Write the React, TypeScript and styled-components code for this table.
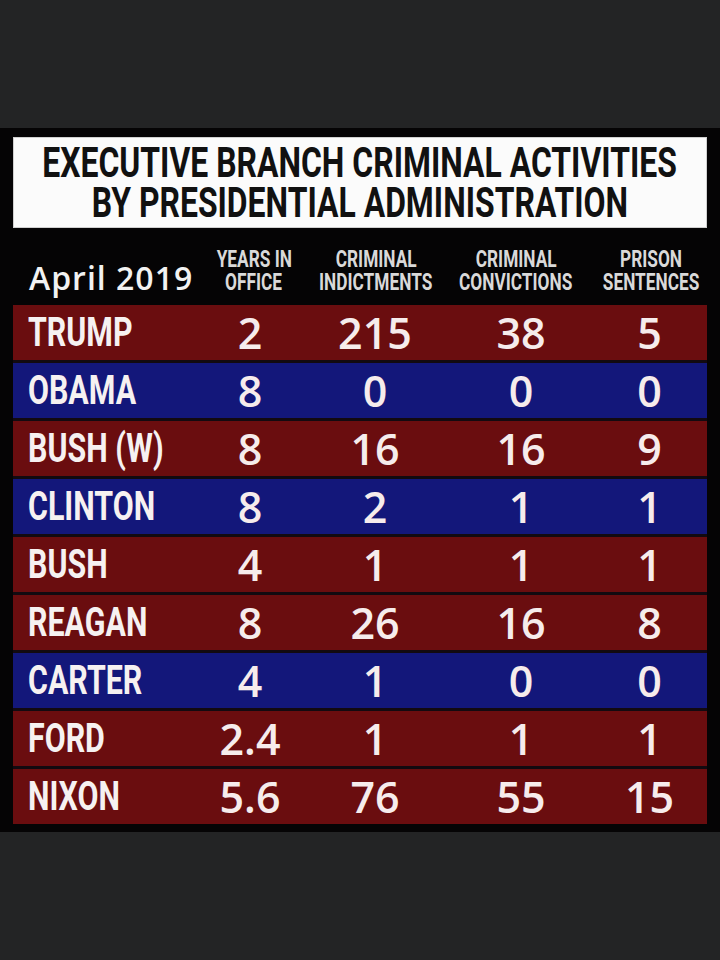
import React from "react";
import styled, { createGlobalStyle } from "styled-components";

const Global = createGlobalStyle`
  html, body { margin: 0; padding: 0; background: #232425; }
  body { font-family: "Open Sans", "Liberation Sans", sans-serif; }
`;

const Page = styled.div`
  width: 720px;
  height: 960px;
  background: #232425;
  display: flex;
  flex-direction: column;
  padding-top: 128px;
  box-sizing: border-box;
`;

const Panel = styled.section`
  background: #050405;
  padding: 9px 13px 8px 13px;
  display: flex;
  flex-direction: column;
`;

const TitleBox = styled.header`
  background: #fbfbfb;
  height: 91px;
  box-sizing: border-box;
  border: 1px solid #d0d0d0;
  display: flex;
  flex-direction: column;
  align-items: center;
  justify-content: center;
  padding-top: 1px;
`;

const Condensed = styled.span<{ $scale: number; $origin?: string }>`
  display: inline-block;
  white-space: nowrap;
  transform: scaleX(${(p) => p.$scale});
  transform-origin: ${(p) => p.$origin ?? "center"} center;
`;

const TitleLine = styled.div`
  font-family: Roboto, "Liberation Sans", sans-serif;
  font-weight: 700;
  font-size: 42px;
  line-height: 40px;
  color: #111;
  display: flex;
  justify-content: center;
  width: 100%;
`;

const Grid = styled.div`
  display: grid;
  grid-template-columns: 187px 100px 150px 142px 115px;
`;

const HeaderRow = styled(Grid)`
  height: 77px;
  align-items: center;
`;

const Month = styled.div`
  font-family: "Open Sans", "Liberation Sans", sans-serif;
  font-weight: 600;
  font-size: 32px;
  letter-spacing: 1px;
  color: #f2f2f2;
  padding-left: 16px;
  padding-top: 22px;
  white-space: nowrap;
`;

const ColHead = styled.div<{ $shift?: number }>`
  font-family: Roboto, "Liberation Sans", sans-serif;
  font-weight: 700;
  font-size: 24px;
  line-height: 23px;
  color: #d9d9d9;
  display: flex;
  flex-direction: column;
  align-items: center;
  padding-top: 8px;
  position: relative;
  left: ${(p) => p.$shift ?? 0}px;
`;

const Rows = styled.div`
  display: flex;
  flex-direction: column;
  gap: 3px;
  background: #120a10;
`;

const Row = styled(Grid)<{ $party: "r" | "d" }>`
  height: 55px;
  align-items: center;
  background: ${(p) => (p.$party === "r" ? "#6a0d0f" : "#13177a")};
`;

const Name = styled.div`
  font-family: Roboto, "Liberation Sans", sans-serif;
  font-weight: 700;
  font-size: 40px;
  color: #f6f1f1;
  padding-left: 15px;
  display: flex;
`;

const Num = styled.div`
  font-family: "Open Sans", "Liberation Sans", sans-serif;
  font-weight: 600;
  font-size: 43px;
  color: #f6ecec;
  text-align: center;
  line-height: 55px;
`;

type Admin = { name: string; party: "r" | "d"; vals: string[] };

const data: Admin[] = [
  { name: "TRUMP", party: "r", vals: ["2", "215", "38", "5"] },
  { name: "OBAMA", party: "d", vals: ["8", "0", "0", "0"] },
  { name: "BUSH (W)", party: "r", vals: ["8", "16", "16", "9"] },
  { name: "CLINTON", party: "d", vals: ["8", "2", "1", "1"] },
  { name: "BUSH", party: "r", vals: ["4", "1", "1", "1"] },
  { name: "REAGAN", party: "r", vals: ["8", "26", "16", "8"] },
  { name: "CARTER", party: "d", vals: ["4", "1", "0", "0"] },
  { name: "FORD", party: "r", vals: ["2.4", "1", "1", "1"] },
  { name: "NIXON", party: "r", vals: ["5.6", "76", "55", "15"] },
];

const headers: { lines: [string, string]; shift: number }[] = [
  { lines: ["YEARS IN", "OFFICE"], shift: 4 },
  { lines: ["CRIMINAL", "INDICTMENTS"], shift: 1 },
  { lines: ["CRIMINAL", "CONVICTIONS"], shift: -5 },
  { lines: ["PRISON", "SENTENCES"], shift: 2 },
];

export default function App() {
  return (
    <>
      <Global />
      <Page>
        <Panel>
          <TitleBox>
            <TitleLine>
              <Condensed $scale={0.76}>EXECUTIVE BRANCH CRIMINAL ACTIVITIES</Condensed>
            </TitleLine>
            <TitleLine>
              <Condensed $scale={0.76}>BY PRESIDENTIAL ADMINISTRATION</Condensed>
            </TitleLine>
          </TitleBox>
          <HeaderRow>
            <Month>April 2019</Month>
            {headers.map(({ lines: [a, b], shift }) => (
              <ColHead key={a + b} $shift={shift}>
                <Condensed $scale={0.72}>{a}</Condensed>
                <Condensed $scale={0.72}>{b}</Condensed>
              </ColHead>
            ))}
          </HeaderRow>
          <Rows>
            {data.map((d) => (
              <Row key={d.name} $party={d.party}>
                <Name>
                  <Condensed $scale={0.76} $origin="left">
                    {d.name}
                  </Condensed>
                </Name>
                {d.vals.map((v, i) => (
                  <Num key={i}>{v}</Num>
                ))}
              </Row>
            ))}
          </Rows>
        </Panel>
      </Page>
    </>
  );
}
